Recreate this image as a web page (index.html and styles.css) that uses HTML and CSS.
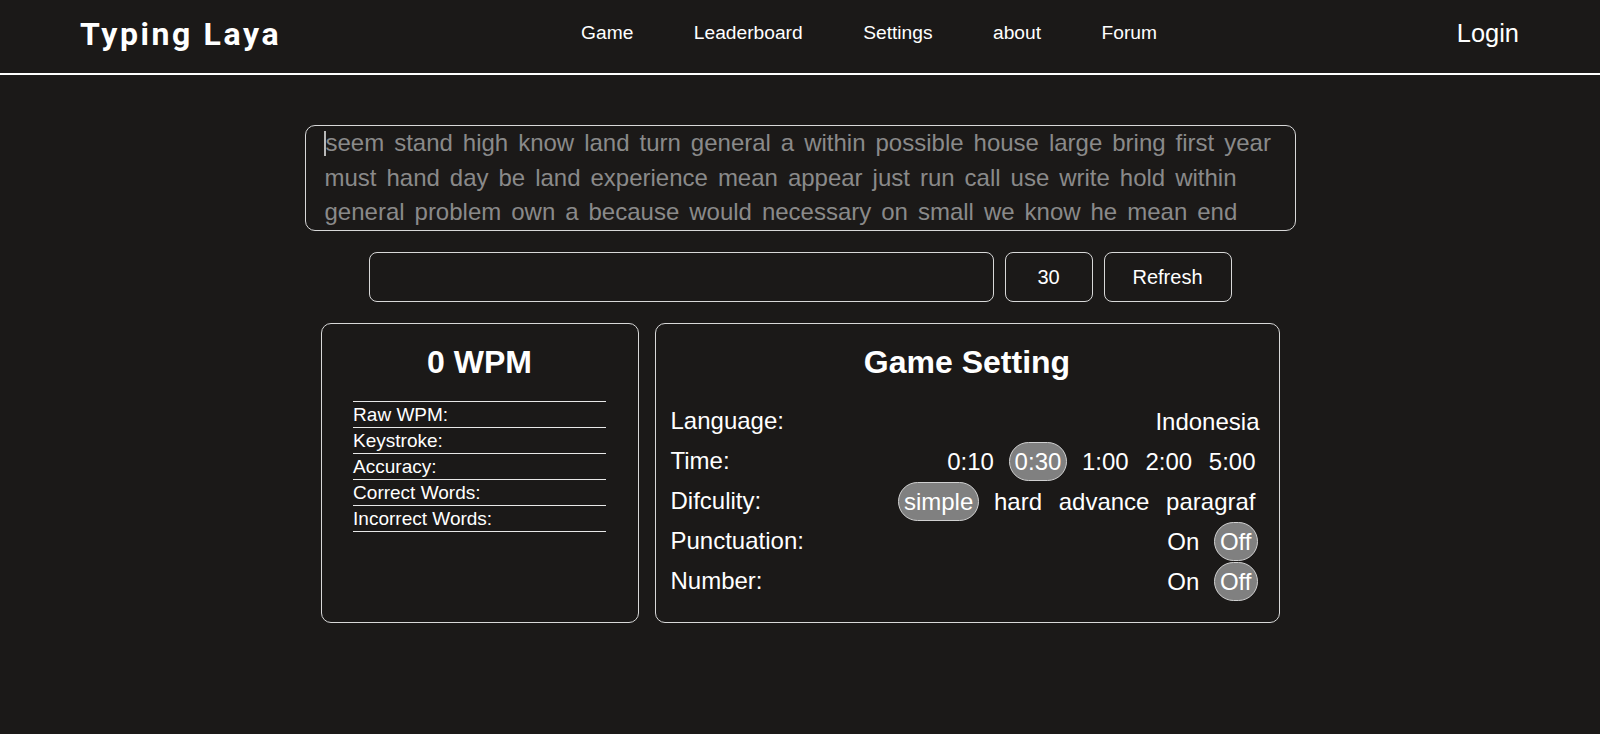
FILE: index.html
```html
<!DOCTYPE html>
<html lang="en">
<head>
<meta charset="utf-8">
<title>Typing Laya</title>
<link rel="stylesheet" href="styles.css">
</head>
<body>
<header class="topbar">
  <div class="logo">Typing Laya</div>
  <nav class="nav">
    <a class="nav-link" href="#">Game</a>
    <a class="nav-link" href="#">Leaderboard</a>
    <a class="nav-link" href="#">Settings</a>
    <a class="nav-link" href="#">about</a>
    <a class="nav-link" href="#">Forum</a>
  </nav>
  <a class="login" href="#">Login</a>
</header>
<main class="main">
  <div class="words"><span class="cursor"></span>seem stand high know land turn general a within possible house large bring first year must hand day be land experience mean appear just run call use write hold within general problem own a because would necessary on small we know he mean end</div>
  <div class="controls">
    <input class="type-input" type="text">
    <div class="timer">30</div>
    <button class="refresh">Refresh</button>
  </div>
  <div class="panels">
    <section class="card result">
      <h1 class="card-title">0 WPM</h1>
      <ul class="stats">
        <li class="stat">Raw WPM:</li>
        <li class="stat">Keystroke:</li>
        <li class="stat">Accuracy:</li>
        <li class="stat">Correct Words:</li>
        <li class="stat">Incorrect Words:</li>
      </ul>
    </section>
    <section class="card settings">
      <h1 class="card-title">Game Setting</h1>
      <div class="row"><span class="label">Language:</span><span class="opts"><span class="opt plain">Indonesia</span></span></div>
      <div class="row"><span class="label">Time:</span><span class="opts"><span class="opt">0:10</span> <span class="opt on">0:30</span> <span class="opt">1:00</span> <span class="opt">2:00</span> <span class="opt">5:00</span></span></div>
      <div class="row"><span class="label">Difculity:</span><span class="opts"><span class="opt on">simple</span> <span class="opt">hard</span> <span class="opt">advance</span> <span class="opt">paragraf</span></span></div>
      <div class="row"><span class="label">Punctuation:</span><span class="opts"><span class="opt">On</span> <span class="opt on">Off</span></span></div>
      <div class="row"><span class="label">Number:</span><span class="opts"><span class="opt">On</span> <span class="opt on">Off</span></span></div>
    </section>
  </div>
</main>
</body>
</html>
```
FILE: styles.css
```css
html, body {
  margin: 0;
  padding: 0;
}
body {
  background: #1b1918;
  color: #ffffff;
  font-family: "Liberation Sans", Arial, sans-serif;
  height: 734px;
  overflow: hidden;
}
.topbar {
  display: flex;
  align-items: center;
  justify-content: space-between;
  box-sizing: border-box;
  height: 75px;
  padding: 0 81px 6px 80px;
  border-bottom: 2px solid #ffffff;
}
.logo {
  font-family: Roboto, "Liberation Sans", sans-serif;
  font-weight: 700;
  font-size: 32px;
  letter-spacing: 2.6px;
  color: #ffffff;
}
.nav {
  display: flex;
  gap: 60.5px;
  padding-bottom: 2px;
}
.nav-link {
  color: #ffffff;
  text-decoration: none;
  font-size: 19.2px;
}
.login {
  color: #ffffff;
  text-decoration: none;
  font-size: 25.4px;
}
.main {
  display: flex;
  flex-direction: column;
  align-items: center;
  padding-top: 50px;
}
.words {
  width: 991px;
  height: 106px;
  box-sizing: border-box;
  border: 1px solid #d8d8d8;
  border-radius: 10px;
  padding: 0 20px 0 19px;
  overflow: hidden;
  font-size: 24px;
  line-height: 34.5px;
  word-spacing: 3.3px;
  color: #8a8a8a;
}
.cursor {
  display: inline-block;
  width: 2px;
  height: 25px;
  background: #b8b8b8;
  vertical-align: -5px;
  margin-left: -1px;
  margin-right: 0;
}
.controls {
  display: flex;
  gap: 11px;
  margin-top: 21px;
}
.type-input {
  width: 625px;
  height: 50px;
  box-sizing: border-box;
  background: transparent;
  border: 1px solid #d8d8d8;
  border-radius: 8px;
  color: #fff;
  font-size: 20px;
  font-family: inherit;
  padding: 0 12px;
  outline: none;
}
.timer, .refresh {
  height: 50px;
  box-sizing: border-box;
  border: 1px solid #d8d8d8;
  border-radius: 8px;
  background: transparent;
  color: #fff;
  font-size: 20px;
  font-family: inherit;
  display: flex;
  align-items: center;
  justify-content: center;
}
.timer { width: 88px; }
.refresh { width: 128px; padding: 0; }
.panels {
  display: flex;
  gap: 16px;
  margin-top: 21px;
}
.card {
  height: 300px;
  box-sizing: border-box;
  border: 1px solid #d8d8d8;
  border-radius: 10px;
  padding-top: 20px;
}
.result { width: 318px; }
.settings { width: 625px; padding-left: 15px; padding-right: 18px; }
.card-title {
  margin: 0 0 20px;
  font-size: 32px;
  font-weight: 700;
  line-height: 37px;
  text-align: center;
}
.settings .card-title {
  margin-right: -3px;
}
.stats {
  list-style: none;
  margin: 0 auto;
  padding: 0;
  width: 80%;
  border-top: 1px solid #e8e8e8;
}
.stat {
  font-size: 19px;
  line-height: 25px;
  border-bottom: 1px solid #e8e8e8;
}
.row {
  display: flex;
  justify-content: space-between;
  align-items: center;
  height: 40px;
  font-size: 24px;
}
.opt {
  display: inline-block;
  padding: 5px 4px;
  border: 1px solid transparent;
  border-radius: 20px;
  line-height: 27px;
}
.opt.plain { padding-right: 0; }
.opt.on {
  margin: 0 3px;
  padding: 5px 5px;
  background: #808080;
  border-color: #d0d0d0;
}
```
